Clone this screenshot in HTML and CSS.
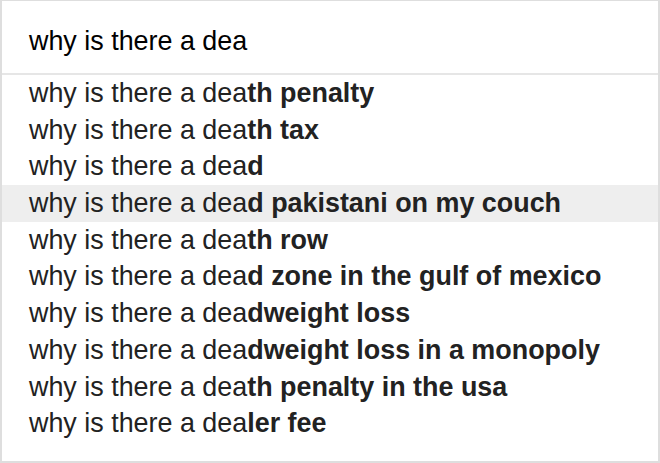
FILE: index.html
```html
<!DOCTYPE html>
<html>
<head>
<meta charset="utf-8">
<link rel="stylesheet" href="styles.css">
</head>
<body>
<div class="box">
  <div class="query">why is there a dea</div>
  <ul class="list">
    <li class="item">why is there a dea<b>th penalty</b></li>
    <li class="item">why is there a dea<b>th tax</b></li>
    <li class="item">why is there a dea<b>d</b></li>
    <li class="item active">why is there a dea<b>d pakistani on my couch</b></li>
    <li class="item">why is there a dea<b>th row</b></li>
    <li class="item">why is there a dea<b>d zone in the gulf of mexico</b></li>
    <li class="item">why is there a dea<b>dweight loss</b></li>
    <li class="item">why is there a dea<b>dweight loss in a monopoly</b></li>
    <li class="item">why is there a dea<b>th penalty in the usa</b></li>
    <li class="item">why is there a dea<b>ler fee</b></li>
  </ul>
</div>
</body>
</html>
```

FILE: styles.css
```css
html, body {
  margin: 0;
  padding: 0;
  background: #fff;
}
.box {
  box-sizing: border-box;
  width: 660px;
  height: 463px;
  border: 2px solid #dedede;
  border-top-width: 1px;
  font-family: "Liberation Sans", Arial, sans-serif;
  font-size: 26.9px;
  display: flex;
  flex-direction: column;
}
.query {
  height: 74px;
  flex: none;
  box-sizing: border-box;
  padding: 22px 0 0 27px;
  line-height: 36px;
  color: #000;
  border-bottom: 2px solid #e6e6e6;
}
.list {
  list-style: none;
  margin: 0;
  padding: 0;
}
.item {
  height: 36.7px;
  line-height: 36px;
  padding-left: 27px;
  color: #222;
  white-space: nowrap;
}
.item b {
  font-weight: bold;
}
.active {
  background: #eeeeee;
}
```
